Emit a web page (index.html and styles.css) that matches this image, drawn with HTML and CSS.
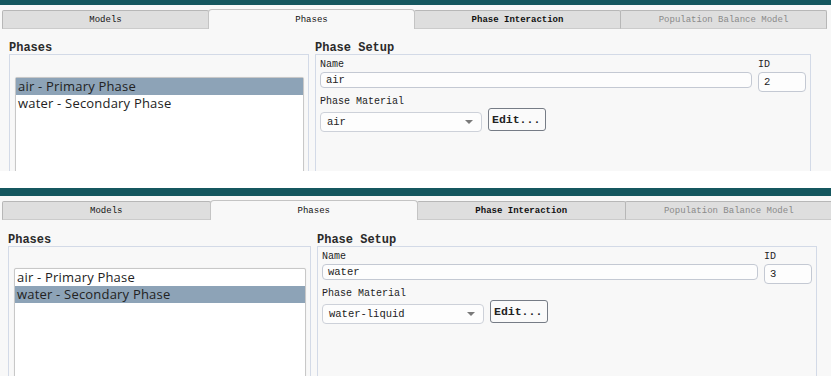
FILE: index.html
```html
<!DOCTYPE html>
<html lang="en">
<head>
<meta charset="utf-8">
<title>Phases</title>
<link rel="stylesheet" href="styles.css">
</head>
<body>
<div class="page">
  <section class="shot shot-a">
    <div class="titlebar"></div>
    <div class="tabs">
      <div class="tab">Models</div>
      <div class="tab tab-active">Phases</div>
      <div class="tab tab-strong">Phase Interaction</div>
      <div class="tab tab-disabled">Population Balance Model</div>
    </div>
    <div class="content">
      <div class="group">
        <div class="group-title">Phases</div>
        <div class="group-box list-box-wrap">
          <div class="listbox">
            <div class="item item-selected">air - Primary Phase</div>
            <div class="item">water - Secondary Phase</div>
          </div>
        </div>
      </div>
      <div class="group">
        <div class="group-title">Phase Setup</div>
        <div class="group-box setup">
          <div class="row">
            <div class="field field-grow">
              <div class="label">Name</div>
              <div class="input">air</div>
            </div>
            <div class="field field-id">
              <div class="label">ID</div>
              <div class="input input-tall">2</div>
            </div>
          </div>
          <div class="label label-material">Phase Material</div>
          <div class="row row-material">
            <div class="select"><span>air</span><span class="arrow"></span></div>
            <div class="button">Edit...</div>
          </div>
        </div>
      </div>
    </div>
  </section>
  <div class="gap"></div>
  <section class="shot shot-b">
    <div class="titlebar"></div>
    <div class="tabs">
      <div class="tab">Models</div>
      <div class="tab tab-active">Phases</div>
      <div class="tab tab-strong">Phase Interaction</div>
      <div class="tab tab-disabled">Population Balance Model</div>
    </div>
    <div class="content">
      <div class="group">
        <div class="group-title">Phases</div>
        <div class="group-box list-box-wrap">
          <div class="listbox">
            <div class="item">air - Primary Phase</div>
            <div class="item item-selected">water - Secondary Phase</div>
          </div>
        </div>
      </div>
      <div class="group">
        <div class="group-title">Phase Setup</div>
        <div class="group-box setup">
          <div class="row">
            <div class="field field-grow">
              <div class="label">Name</div>
              <div class="input">water</div>
            </div>
            <div class="field field-id">
              <div class="label">ID</div>
              <div class="input input-tall">3</div>
            </div>
          </div>
          <div class="label label-material">Phase Material</div>
          <div class="row row-material">
            <div class="select"><span>water-liquid</span><span class="arrow"></span></div>
            <div class="button">Edit...</div>
          </div>
        </div>
      </div>
    </div>
  </section>
</div>
</body>
</html>
```

FILE: styles.css
```css
* { box-sizing: border-box; }

html, body {
  margin: 0;
  padding: 0;
  background: #ffffff;
}

.page {
  width: 831px;
  height: 376px;
  overflow: hidden;
  font-family: "Liberation Mono", "DejaVu Sans Mono", monospace;
  color: #1c1c1c;
}

.shot {
  background: #f8f8f8;
  overflow: hidden;
  display: flex;
  flex-direction: column;
}

.shot-a {
  height: 171px;
  --bar-h: 5px;
  --tab-w: 207px;
  --pad-left: 9px;
  --col-left: 300px;
  --col-right: 496px;
  --title-pad: 13px;
  --list-top: 22px;
}

.shot-b {
  height: 188px;
  --bar-h: 8px;
  --tab-w: 208.5px;
  --pad-left: 8px;
  --col-left: 303px;
  --col-right: 500px;
  --title-pad: 14px;
  --list-top: 21px;
}

.gap {
  height: 17px;
  background: #ffffff;
}

.titlebar {
  height: var(--bar-h);
  background: #15575f;
  flex: none;
}

.tabs {
  display: flex;
  align-items: flex-end;
  height: 20px;
  margin-top: 4px;
  padding-left: 2px;
  flex: none;
}

.tab {
  width: var(--tab-w);
  height: 19px;
  flex: none;
  border: 1px solid #b7b7b7;
  border-bottom-color: #cbcbcb;
  border-radius: 2px 2px 0 0;
  background: #dedede;
  font-size: 9px;
  color: #111;
  display: flex;
  align-items: center;
  justify-content: center;
  padding-top: 1px;
  margin-right: -1px;
}

.tab-active {
  height: 20px;
  background: #f8f8f8;
  border-color: #c4c4c4;
  border-bottom: none;
  border-radius: 4px 4px 0 0;
  position: relative;
  z-index: 1;
}

.tab-strong {
  font-weight: bold;
}

.tab-disabled {
  color: #8a8a8a;
}

.content {
  display: grid;
  grid-template-columns: var(--col-left) var(--col-right);
  column-gap: 6px;
  padding-left: var(--pad-left);
  flex: none;
}

.group {
  display: flex;
  flex-direction: column;
}

.group-title {
  padding-top: var(--title-pad);
  height: calc(var(--title-pad) + 12px);
  font-size: 12px;
  line-height: 12px;
  font-weight: bold;
  color: #2a2a2a;
}

.group-box {
  border: 1px solid #d3dae7;
  height: 220px;
}

.list-box-wrap {
  padding: var(--list-top) 4px 0 5px;
}

.listbox {
  height: 220px;
  background: #ffffff;
  border: 1px solid #c8c8c8;
  border-radius: 2px;
  box-shadow: 0 0 1px rgba(0, 0, 0, 0.12);
}

.item {
  height: 17px;
  padding-left: 2px;
  font-family: "Open Sans", "Liberation Sans", sans-serif;
  font-size: 13px;
  letter-spacing: 0.2px;
  line-height: 17px;
  color: #222;
  white-space: nowrap;
}

.item-selected {
  background: #8da3b7;
}

.setup {
  padding: 3px 4px 0 4px;
}

.row {
  display: flex;
  gap: 6px;
  align-items: flex-start;
}

.field {
  display: flex;
  flex-direction: column;
}

.field-grow {
  flex: 1;
}

.field-id {
  width: 48px;
  flex: none;
}

.label {
  font-size: 10px;
  line-height: 13px;
  height: 13px;
  color: #1e1e1e;
  white-space: nowrap;
}

.field .label {
  margin-bottom: 1px;
}

.label-material {
  margin-top: 3px;
}

.input {
  height: 16px;
  border: 1px solid #c4c9d3;
  border-radius: 4px;
  background: #fdfdfd;
  padding-left: 5px;
  font-size: 10.5px;
  display: flex;
  align-items: center;
  color: #222;
}

.input-tall {
  height: 20px;
}

.row-material {
  align-items: flex-start;
}

.select {
  width: 162px;
  height: 20px;
  margin-top: 4px;
  border: 1px solid #cdd1d9;
  border-radius: 4px;
  background: #fdfdfd;
  padding: 0 8px 0 6px;
  display: flex;
  align-items: center;
  justify-content: space-between;
  font-size: 10.5px;
  color: #222;
}

.arrow {
  width: 0;
  height: 0;
  border-left: 4px solid transparent;
  border-right: 4px solid transparent;
  border-top: 4px solid #7a7a7a;
}

.button {
  width: 58px;
  height: 23px;
  border: 1px solid #767c86;
  border-radius: 3px;
  background: #fafafa;
  padding-left: 3px;
  font-size: 11.5px;
  font-weight: bold;
  display: flex;
  align-items: center;
  color: #222;
  white-space: nowrap;
}
```
